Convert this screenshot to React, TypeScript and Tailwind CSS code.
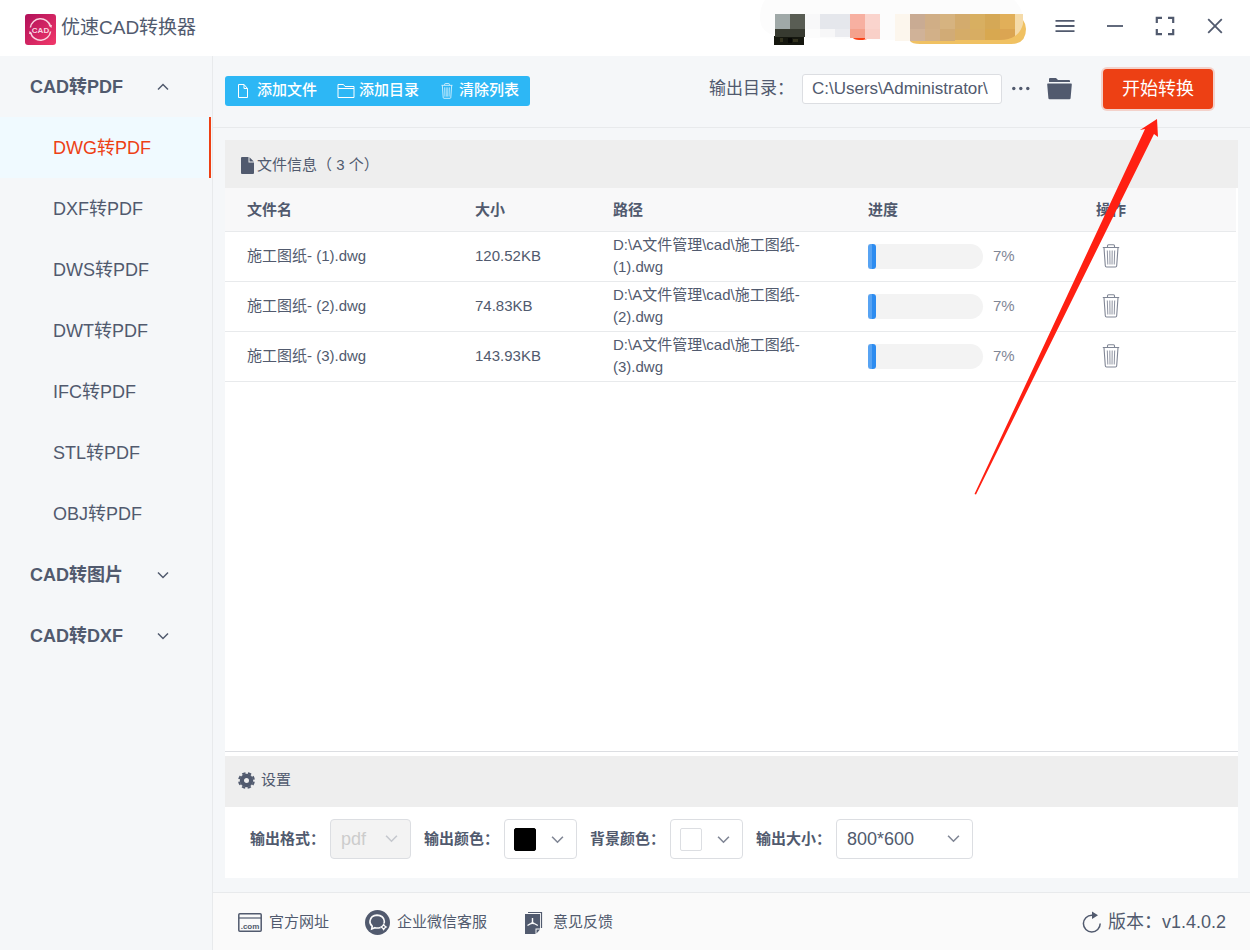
import { useState } from 'react';
import type { ReactNode } from 'react';

type ConvertFile = {
  id: number;
  name: string;
  size: string;
  path: string;
  progress: number;
};

const pdfItems = ['DWG转PDF', 'DXF转PDF', 'DWS转PDF', 'DWT转PDF', 'IFC转PDF', 'STL转PDF', 'OBJ转PDF'];

const files: ConvertFile[] = [
  { id: 1, name: '施工图纸- (1).dwg', size: '120.52KB', path: 'D:\\A文件管理\\cad\\施工图纸- (1).dwg', progress: 7 },
  { id: 2, name: '施工图纸- (2).dwg', size: '74.83KB', path: 'D:\\A文件管理\\cad\\施工图纸- (2).dwg', progress: 7 },
  { id: 3, name: '施工图纸- (3).dwg', size: '143.93KB', path: 'D:\\A文件管理\\cad\\施工图纸- (3).dwg', progress: 7 },
];

function LogoIcon() {
  return (
    <svg className="h-[31px] w-[31px]" viewBox="0 0 31 31" aria-hidden="true">
      <defs>
        <linearGradient id="logo" x1="0" y1="0" x2="1" y2="1">
          <stop offset="0" stopColor="#b0105a" />
          <stop offset="1" stopColor="#f2386a" />
        </linearGradient>
      </defs>
      <rect width="31" height="31" rx="3" fill="url(#logo)" />
      <g fill="none" stroke="#f9d5e0" strokeWidth="1.5">
        <path d="M5.4 13.5A10.3 10.3 0 0 1 25.4 12" />
        <path d="M25.6 17.5A10.3 10.3 0 0 1 5.6 19" />
      </g>
      <path d="M23.6 11.5l3.4-.6-.6 3zM7.4 19.5l-3.4.6.6-3z" fill="#f9d5e0" />
      <text
        x="15.5"
        y="18.5"
        textAnchor="middle"
        fontSize="8"
        fontWeight="700"
        fill="#f9d5e0"
        fontFamily="Liberation Sans, sans-serif"
      >
        CAD
      </text>
    </svg>
  );
}

function Chevron({ up = false, className = 'h-3 w-3' }: { up?: boolean; className?: string }) {
  return (
    <svg className={className} viewBox="0 0 12 12" fill="none" stroke="currentColor" strokeWidth="1.5" aria-hidden="true">
      <path d={up ? 'M1 8.5L6 3.5l5 5' : 'M1 3.5l5 5 5-5'} />
    </svg>
  );
}

function TrashIcon({ className }: { className: string }) {
  return (
    <svg className={className} viewBox="0 0 18 24" fill="none" stroke="currentColor" strokeWidth="1.1" aria-hidden="true">
      <path d="M.8 3.5h16.4M5.5 3.2V1.8Q5.5.8 6.5.8h5q1 0 1 1v1.4M2 3.8l1.3 18q.1 1.2 1.2 1.2h9q1.1 0 1.2-1.2L16 3.8" />
      <path d="M5.3 6.5l.5 14M7.8 6.5l.2 14M10.2 6.5l-.2 14M12.7 6.5l-.5 14" strokeWidth=".9" />
    </svg>
  );
}

// Pixelated account area in the title bar
function AccountMosaic() {
  const cells: [number, number, number, number, string][] = [
    [25, 14, 15, 15, '#a0a9a8'],
    [40, 14, 15, 15, '#595d54'],
    [25, 29, 30, 8, '#373a30'],
    [55, 14, 15, 15, '#f8f8f9'],
    [70, 14, 30, 15, '#e5e7ec'],
    [70, 29, 15, 8, '#f7f7f8'],
    [85, 29, 15, 8, '#ebecf0'],
    [100, 14, 15, 15, '#f7b0a1'],
    [115, 14, 15, 15, '#fad4cd'],
    [100, 29, 15, 9, '#f4a18c'],
    [115, 29, 15, 10, '#f9d0c8'],
    [145, 14, 15, 27, '#fcf6ed'],
    [160, 14, 15, 15, '#c9ab93'],
    [175, 14, 15, 15, '#d0ae86'],
    [190, 14, 15, 15, '#d6b380'],
    [205, 14, 15, 15, '#d3ab6d'],
    [220, 14, 15, 15, '#d8af61'],
    [235, 14, 15, 15, '#d5a856'],
    [250, 14, 15, 15, '#e1af59'],
    [160, 29, 15, 12, '#d0b298'],
    [175, 29, 15, 12, '#d2b088'],
    [190, 29, 15, 12, '#d1ab76'],
    [205, 29, 15, 11, '#d5ac68'],
    [220, 29, 15, 11, '#d8ad62'],
    [235, 29, 15, 11, '#d8a850'],
  ];
  return (
    <svg className="h-14 w-[280px]" viewBox="10 0 280 56" aria-hidden="true">
      <path d="M15 0h249q9 8 9 20v9q-4 11-20 11H140L30 37Q10 34 10 18 10 7 15 0z" fill="#fcfcfc" />
      <rect x="24" y="36" width="30" height="9" fill="#15170f" />
      <path d="M30 38h3v4h-3zM43 39h5v3h-5z" fill="#33321f" />
      <path d="M38 38h4v5h-4z" fill="#080806" />
      <path d="M102 37h18q-3 3-7 3h-4q-5 0-7-3z" fill="#fb4116" />
      <path d="M160 38h95q12-3 18-18 3 4 3 9 0 15-15 15H170q-8 0-10-3z" fill="#f0c162" />
      {cells.map(([x, y, w, h, fill]) => (
        <rect key={`${x}-${y}`} x={x} y={y} width={w} height={h} fill={fill} />
      ))}
      <path d="M250 29h15v7q-6 4-15 4z" fill="#dba552" />
      <path d="M265 14h8v10q-2 8-8 12z" fill="#f5dba9" />
    </svg>
  );
}

function TitleBar() {
  return (
    <header className="flex h-14 items-center justify-between bg-white pl-[25px] pr-5">
      <div className="flex items-center gap-[5px] pt-0.5">
        <LogoIcon />
        <h1 className="pb-0.5 text-[19px] leading-7">优速CAD转换器</h1>
      </div>
      <div className="flex items-center">
        <AccountMosaic />
        <div className="flex items-center gap-5 pb-1 pl-2.5">
          <button type="button" aria-label="菜单" className="flex h-[30px] w-[30px] items-center justify-center">
            <svg className="h-5 w-5" viewBox="0 0 20 20" stroke="currentColor" strokeWidth="1.8" aria-hidden="true">
              <path d="M.5 4.8h19M.5 10h19M.5 15.2h19" />
            </svg>
          </button>
          <button type="button" aria-label="最小化" className="flex h-[30px] w-[30px] items-center justify-center">
            <svg className="h-5 w-5" viewBox="0 0 20 20" stroke="currentColor" strokeWidth="1.8" aria-hidden="true">
              <path d="M2 10h16" />
            </svg>
          </button>
          <button type="button" aria-label="最大化" className="flex h-[30px] w-[30px] items-center justify-center">
            <svg className="h-5 w-5" viewBox="0 0 20 20" fill="none" stroke="currentColor" strokeWidth="2.2" aria-hidden="true">
              <path d="M7 1.8H1.8V7M13 1.8h5.2V7M7 18.2H1.8V13M13 18.2h5.2V13" />
            </svg>
          </button>
          <button type="button" aria-label="关闭" className="flex h-[30px] w-[30px] items-center justify-center">
            <svg className="h-5 w-5" viewBox="0 0 20 20" stroke="currentColor" strokeWidth="1.8" aria-hidden="true">
              <path d="M3.2 3.2l13.6 13.6M16.8 3.2L3.2 16.8" />
            </svg>
          </button>
        </div>
      </div>
    </header>
  );
}

function SidebarGroup({ label, open, children }: { label: string; open?: boolean; children?: ReactNode }) {
  return (
    <li>
      <button
        type="button"
        aria-expanded={!!open}
        className="flex h-[61px] w-full items-center justify-between pl-[30px] pr-[43px] text-lg font-bold"
      >
        {label}
        <Chevron up={open} />
      </button>
      {children}
    </li>
  );
}

function Sidebar() {
  const [active, setActive] = useState('DWG转PDF');

  return (
    <nav className="w-[213px] shrink-0 border-r border-[#e8eaec]">
      <ul>
        <SidebarGroup label="CAD转PDF" open>
          <ul>
            {pdfItems.map((item) => (
              <li key={item} className="pr-px">
                <button
                  type="button"
                  onClick={() => setActive(item)}
                  className={`flex h-[61px] w-full items-center border-r-2 pl-[53px] text-lg ${
                    item === active ? 'border-[#ed4014] bg-[#f0faff] text-[#ed4014]' : 'border-transparent'
                  }`}
                >
                  {item}
                </button>
              </li>
            ))}
          </ul>
        </SidebarGroup>
        <SidebarGroup label="CAD转图片" />
        <SidebarGroup label="CAD转DXF" />
      </ul>
    </nav>
  );
}

function Toolbar() {
  return (
    <div className="flex h-[72px] items-center justify-between border-b border-[#e8eaec] pb-1.5 pl-3 pr-[37px]">
      <div className="mt-1 flex h-[30px] items-center gap-5 rounded-[3px] bg-[#2db7f5] pl-3 pr-[11px] text-[15px] font-medium text-white">
        <button type="button" className="flex items-center gap-2">
          <svg className="h-4 w-3" viewBox="0 0 12 16" fill="none" stroke="currentColor" strokeWidth="1" aria-hidden="true">
            <path d="M1.5 1.5h5.5l3.5 4v9h-9zM7 1.5v4h3.5" />
          </svg>
          添加文件
        </button>
        <button type="button" className="flex items-center gap-1">
          <svg className="h-4 w-[18px]" viewBox="0 0 18 16" fill="none" stroke="currentColor" strokeWidth="1" aria-hidden="true">
            <path d="M1 14.5v-13h5.5l1.5 2h9v11zM1 5.5h16" />
          </svg>
          添加目录
        </button>
        <button type="button" className="ml-0.5 flex items-center gap-1.5">
          <TrashIcon className="h-4 w-3" />
          清除列表
        </button>
      </div>
      <div className="flex items-center">
        <label htmlFor="output-dir" className="text-[17px]">
          输出目录：
        </label>
        <input
          id="output-dir"
          type="text"
          defaultValue="C:\Users\Administrator\"
          className="ml-2 h-[30px] w-[200px] rounded-[3px] border border-[#dcdee2] bg-white px-[9px] text-[17px] outline-none"
        />
        <button type="button" aria-label="选择目录" className="ml-2.5">
          <svg className="h-4 w-[18px]" viewBox="0 0 18 16" fill="currentColor" aria-hidden="true">
            <circle cx="1.8" cy="7.5" r="1.7" />
            <circle cx="8.8" cy="7.5" r="1.7" />
            <circle cx="15.8" cy="7.5" r="1.7" />
          </svg>
        </button>
        <button type="button" aria-label="打开目录" className="ml-[17px]">
          <svg className="h-6 w-[25px]" viewBox="0 0 25 24" fill="currentColor" aria-hidden="true">
            <path d="M2 5V2q0-1 1-1h6l2 2h11q1 0 1 1v1z" />
            <path d="M.9 6.6h23.2q.8 0 .7.9l-1.2 13.7q-.1 1-1.2 1H2.6q-1.1 0-1.2-1L.2 7.5q-.1-.9.7-.9z" />
          </svg>
        </button>
        <button
          type="button"
          className="ml-[31px] h-10 w-[110px] rounded bg-[#ed4014] text-lg text-white ring-2 ring-[#ed4014]/20"
        >
          开始转换
        </button>
      </div>
    </div>
  );
}

function FileTable() {
  return (
    <div className="pr-0.5">
      <table className="w-full table-fixed text-left text-[15px] leading-[22px]">
        <colgroup>
          <col className="w-[228px]" />
          <col className="w-[138px]" />
          <col className="w-[255px]" />
          <col className="w-[228px]" />
          <col />
        </colgroup>
        <thead>
          <tr className="h-[43px] border-b border-[#e8eaec] bg-[#f8f8f9]">
            {['文件名', '大小', '路径', '进度', '操作'].map((title) => (
              <th key={title} className="px-[22px] pt-0.5 font-bold">
                {title}
              </th>
            ))}
          </tr>
        </thead>
        <tbody>
          {files.map((file) => (
            <tr key={file.id} className="h-[50px] border-b border-[#e8eaec]">
              <td className="px-[22px]">{file.name}</td>
              <td className="px-[22px]">{file.size}</td>
              <td className="px-[22px]">{file.path}</td>
              <td className="px-[22px]">
                <div className="flex items-center gap-2.5">
                  <div className="h-[25px] w-[115px] rounded-l-[3px] rounded-r-full bg-[#f3f3f3]">
                    <div
                      className="h-full rounded-[3px] bg-linear-to-r from-[#57a3f3] from-50% to-[#2d8cf0] to-50%"
                      style={{ width: `${file.progress}%` }}
                    />
                  </div>
                  <span className="text-[#808695]">{file.progress}%</span>
                </div>
              </td>
              <td className="pl-[28px]">
                <button type="button" aria-label="删除" className="flex text-[#808695]">
                  <TrashIcon className="h-6 w-[18px]" />
                </button>
              </td>
            </tr>
          ))}
        </tbody>
      </table>
    </div>
  );
}

function ColorPicker({ label, swatch }: { label: string; swatch: string }) {
  return (
    <div className="flex items-center gap-[5px]">
      <span>{label}</span>
      <button
        type="button"
        aria-label={label}
        className="flex h-10 w-[73px] items-center justify-between rounded border border-[#dcdee2] pl-[9px] pr-3 text-[#808695]"
      >
        <span className={`h-[23px] w-[22px] rounded-xs border ${swatch}`} />
        <Chevron className="h-[13px] w-[13px]" />
      </button>
    </div>
  );
}

function Settings() {
  return (
    <section className="bg-white">
      <h2 className="flex h-[51px] items-center gap-1.5 bg-[#eee] pb-0.5 pl-[13px] text-[15px]">
        <svg className="h-[17px] w-[17px]" viewBox="0 0 17 17" fill="none" stroke="currentColor" aria-hidden="true">
          <circle cx="8.5" cy="8.5" r="4.6" strokeWidth="4.2" />
          <circle cx="8.5" cy="8.5" r="7.4" strokeWidth="2" strokeDasharray="3.4 2.41" strokeDashoffset="-1.2" />
        </svg>
        设置
      </h2>
      <div className="flex items-center gap-[13px] pb-[19px] pl-[25px] pt-3 text-[15px] font-bold">
        <div className="flex items-center gap-[5px]">
          <label htmlFor="format">输出格式：</label>
          <div className="relative">
            <select
              id="format"
              disabled
              className="block h-10 w-[81px] appearance-none rounded border border-[#dcdee2] bg-[#f3f3f3] px-2.5 text-lg font-normal text-[#ccc] opacity-100"
            >
              <option>pdf</option>
            </select>
            <Chevron className="pointer-events-none absolute right-[13px] top-[13px] h-[13px] w-[13px] text-[#c5c8ce]" />
          </div>
        </div>
        <ColorPicker label="输出颜色：" swatch="border-black bg-black" />
        <ColorPicker label="背景颜色：" swatch="border-[#dcdee2] bg-white" />
        <div className="flex items-center gap-[5px]">
          <label htmlFor="size">输出大小：</label>
          <div className="relative">
            <select
              id="size"
              className="block h-10 w-[137px] appearance-none rounded border border-[#dcdee2] bg-white px-2.5 text-lg font-normal"
            >
              <option>800*600</option>
            </select>
            <Chevron className="pointer-events-none absolute right-[13px] top-[13px] h-[13px] w-[13px] text-[#808695]" />
          </div>
        </div>
      </div>
    </section>
  );
}

function Footer() {
  return (
    <footer className="flex h-[58px] items-center justify-between border-t border-[#e8eaec] bg-[#fafafa] pl-[25px] pr-6 text-[15px]">
      <div className="flex items-center gap-9 pt-0.5">
        <a href="#site" className="flex items-center gap-[7px]">
          <svg className="h-[19px] w-6" viewBox="0 0 24 19" fill="none" stroke="currentColor" aria-hidden="true">
            <rect x=".8" y=".8" width="22.4" height="17.4" rx="1" strokeWidth="1.5" />
            <path d="M1 5h22" strokeWidth="1.2" />
            <text
              x="12"
              y="15.5"
              textAnchor="middle"
              fontSize="8"
              fontWeight="700"
              stroke="none"
              fill="currentColor"
              fontFamily="Liberation Sans, sans-serif"
            >
              .com
            </text>
          </svg>
          官方网址
        </a>
        <a href="#service" className="flex items-center gap-[7px]">
          <svg className="h-[25px] w-[25px]" viewBox="0 0 25 25" aria-hidden="true">
            <circle cx="12.5" cy="12.5" r="12.5" fill="currentColor" />
            <g fill="none" stroke="#fafafa" strokeWidth="1.6">
              <path d="M15.5 17.5q-3 1-5.5.2l-3.3 1.3.5-2.8Q4.500 13.800 5 10.800 6 5.300 12 5.100q6.500.2 7.300 5.900.1 1.300-.3 2.400" />
            </g>
            <path d="M18.6 13.3l1.5 2.2 2.2 1.5-2.2 1.5-1.5 2.2-1.5-2.2-2.200-1.500 2.200-1.500z" fill="#fafafa" />
            <circle cx="18.6" cy="17" r="1" fill="currentColor" />
          </svg>
          企业微信客服
        </a>
        <a href="#feedback" className="flex items-center gap-2.5">
          <svg className="h-6 w-5" viewBox="-1 0 20 24" aria-hidden="true">
            <path d="M4 1.5h13.500V17" fill="none" stroke="currentColor" strokeWidth="1.2" />
            <path d="M1 3h15v14.5h-4.5V23H1z" fill="currentColor" />
            <path d="M12.5 18.5H16L12.5 22.5z" fill="currentColor" />
            <path
              d="M8.5 7v4.500l-5 3M8.500 11.500l5.300 3M6.800 12.700q1.800-1 3.500 0"
              fill="none"
              stroke="#fafafa"
              strokeWidth="1.4"
            />
          </svg>
          意见反馈
        </a>
      </div>
      <div className="flex items-center gap-1.5 text-lg">
        <svg className="h-[22px] w-5" viewBox="0 0 20 22" fill="none" stroke="currentColor" strokeWidth="1.5" aria-hidden="true">
          <path d="M11 4.2H9.8a8.4 8.4 0 1 0 8.4 8.4" />
          <path d="M10 .5v7.5l6-3.8z" fill="currentColor" stroke="none" />
        </svg>
        <span>版本：v1.4.0.2</span>
      </div>
    </footer>
  );
}

// Callout arrow pointing at the convert button
function PointerArrow() {
  return (
    <svg
      className="pointer-events-none absolute right-[90px] top-[118px] h-[378px] w-[188px]"
      viewBox="0 0 188 378"
      fill="#ff2012"
      aria-hidden="true"
    >
      <path d="M185 1L168 12l5-1L2.5 376l1.500.5L182 16l4 3z" />
    </svg>
  );
}

export default function App() {
  return (
    <div className="relative flex min-h-screen flex-col bg-[#f5f7f9] font-['Liberation_Sans','Noto_Sans_CJK_SC',sans-serif] text-[#515a6e]">
      <TitleBar />
      <div className="flex flex-1">
        <Sidebar />
        <main className="flex min-w-0 flex-1 flex-col">
          <Toolbar />
          <div className="flex flex-1 flex-col px-3 pb-3.5 pt-3">
            <section className="flex flex-1 flex-col border-b border-[#dcdee2] bg-white">
              <h2 className="flex h-12 items-center gap-[3px] bg-[#eee] pl-4 pt-0.5 text-[15px]">
                <svg className="h-[17px] w-[13px]" viewBox="0 0 13 17" fill="currentColor" aria-hidden="true">
                  <path d="M1 0h6.5v5.5H13V16q0 1-1 1H1q-1 0-1-1V1q0-1 1-1z" />
                  <path d="M8.5.3L12.8 4.5H8.5z" />
                </svg>
                文件信息（ 3 个）
              </h2>
              <FileTable />
            </section>
            <div className="h-1 bg-white" />
            <Settings />
          </div>
          <Footer />
        </main>
      </div>
      <PointerArrow />
    </div>
  );
}
